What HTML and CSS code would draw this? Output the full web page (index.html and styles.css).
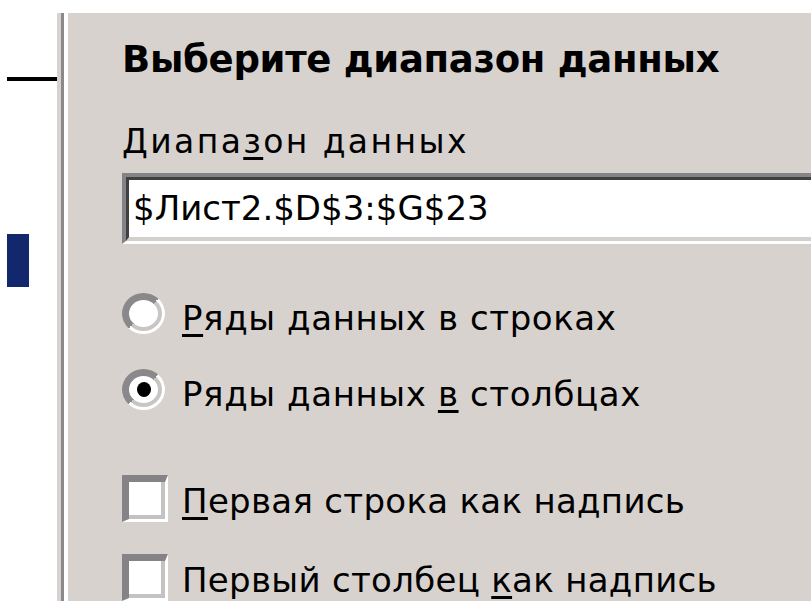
FILE: index.html
```html
<!DOCTYPE html>
<html lang="ru">
<head>
<meta charset="utf-8">
<title>Диапазон данных</title>
<link rel="stylesheet" href="styles.css">
</head>
<body>
<div class="top-gap"></div>
<div class="window">
  <aside class="steps">
    <div class="step-rule"></div>
    <div class="step-mark"></div>
  </aside>
  <div class="separator">
    <span class="sep-face"></span>
    <span class="sep-shadow"></span>
    <span class="sep-light"></span>
  </div>
  <main class="page">
    <h1 class="title">Выберите диапазон данных</h1>
    <label class="field-label">Диапа<u>з</u>он данных</label>
    <div class="field">
      <div class="field-inner">$Лист2.$D$3:$G$23</div>
    </div>
    <div class="option radio-row first">
      <span class="radio"><span class="radio-in"><span class="radio-core"></span></span></span>
      <span class="opt-text"><u>Р</u>яды данных в строках</span>
    </div>
    <div class="option radio-row second">
      <span class="radio"><span class="radio-in"><span class="radio-core"><span class="dot"></span></span></span></span>
      <span class="opt-text">Ряды данных <u>в</u> столбцах</span>
    </div>
    <div class="option check-row first">
      <span class="check"><span class="check-inner"></span></span>
      <span class="opt-text"><u>П</u>ервая строка как надпись</span>
    </div>
    <div class="option check-row second">
      <span class="check"><span class="check-inner"></span></span>
      <span class="opt-text">Первый столбец <u>к</u>ак надпись</span>
    </div>
  </main>
</div>
</body>
</html>
```

FILE: styles.css
```css
html, body {
  margin: 0;
  padding: 0;
  background: #ffffff;
  overflow: hidden;
}

body {
  width: 811px;
  height: 601px;
  font-family: "DejaVu Sans", "Liberation Sans", sans-serif;
  color: #000;
}

.top-gap {
  height: 13px;
}

.window {
  display: flex;
  height: 588px;
}

/* left step list */
.steps {
  width: 50px;
  padding-left: 7px;
  background: #fff;
  flex: none;
}

.step-rule {
  margin-top: 64px;
  height: 4px;
  width: 50px;
  background: #000;
}

.step-mark {
  margin-top: 153px;
  width: 22px;
  height: 53px;
  background: #13286c;
}

/* vertical etched separator */
.separator {
  display: flex;
  flex: none;
}

.sep-face {
  width: 4px;
  background: #d8d2cf;
}

.sep-shadow {
  width: 3px;
  background: #8b898c;
}

.sep-light {
  width: 4px;
  background: #fff;
}

/* page body */
.page {
  flex: 1;
  background: #d8d2cf;
  padding-left: 54px;
  display: flex;
  flex-direction: column;
  min-width: 0;
}

.title {
  margin: 28px 0 0;
  font-size: 37px;
  line-height: 38px;
  letter-spacing: -0.3px;
  font-weight: bold;
  white-space: nowrap;
}

.field-label {
  display: block;
  margin-top: 46px;
  font-size: 33px;
  line-height: 34px;
  letter-spacing: 2.4px;
  white-space: nowrap;
}

u {
  text-decoration-thickness: 3px;
  text-underline-offset: 4px;
}

.field {
  margin-top: 14px;
  height: 64px;
  border-top: 4px solid #858385;
  border-left: 4px solid #858385;
  border-bottom: 3px solid #fff;
  margin-right: -20px;
}

.field-inner {
  box-sizing: border-box;
  height: 64px;
  border-top: 3px solid #404040;
  border-left: 3px solid #404040;
  border-bottom: 4px solid #d3cfcc;
  background: #fff;
  padding-left: 4px;
  font-size: 34px;
  line-height: 57px;
  white-space: nowrap;
}

.option {
  display: flex;
  align-items: flex-start;
  white-space: nowrap;
}

.opt-text {
  font-size: 34px;
  line-height: 40px;
}

.radio-row .opt-text {
  margin-left: 17px;
  padding-top: 5px;
  letter-spacing: 0.6px;
}

.check-row .opt-text {
  margin-left: 14px;
  padding-top: 6px;
  letter-spacing: 0.3px;
}

.radio-row.first {
  margin-top: 49px;
}

.radio-row.second {
  margin-top: 31px;
}

/* sunken round button: grey shadow top-left, light edges bottom-right */
.radio {
  box-sizing: border-box;
  width: 43px;
  height: 41px;
  padding: 3px;
  border-radius: 50%;
  background: linear-gradient(135deg, #8a888a 50%, #ffffff 50%);
  flex: none;
  display: flex;
}

.radio-in {
  flex: 1;
  padding: 4px;
  border-radius: 50%;
  background: linear-gradient(135deg, #8a888a 50%, #c8c5c4 50%);
  display: flex;
}

.radio-core {
  flex: 1;
  border-radius: 50%;
  background: #fff;
  display: flex;
  align-items: center;
  justify-content: center;
}

.dot {
  width: 14px;
  height: 15px;
  border-radius: 50%;
  background: #000;
}

.check-row.first {
  margin-top: 61px;
}

.check-row.second {
  margin-top: 32px;
}

.check {
  box-sizing: border-box;
  width: 46px;
  height: 47px;
  border-top: 7px solid #858385;
  border-left: 7px solid #858385;
  border-right: 3px solid #fff;
  border-bottom: 3px solid #fff;
  flex: none;
}

.check-inner {
  display: block;
  width: 100%;
  height: 100%;
  box-sizing: border-box;
  background: #fff;
  border-right: 4px solid #c4c2c2;
  border-bottom: 4px solid #c4c2c2;
}
```
